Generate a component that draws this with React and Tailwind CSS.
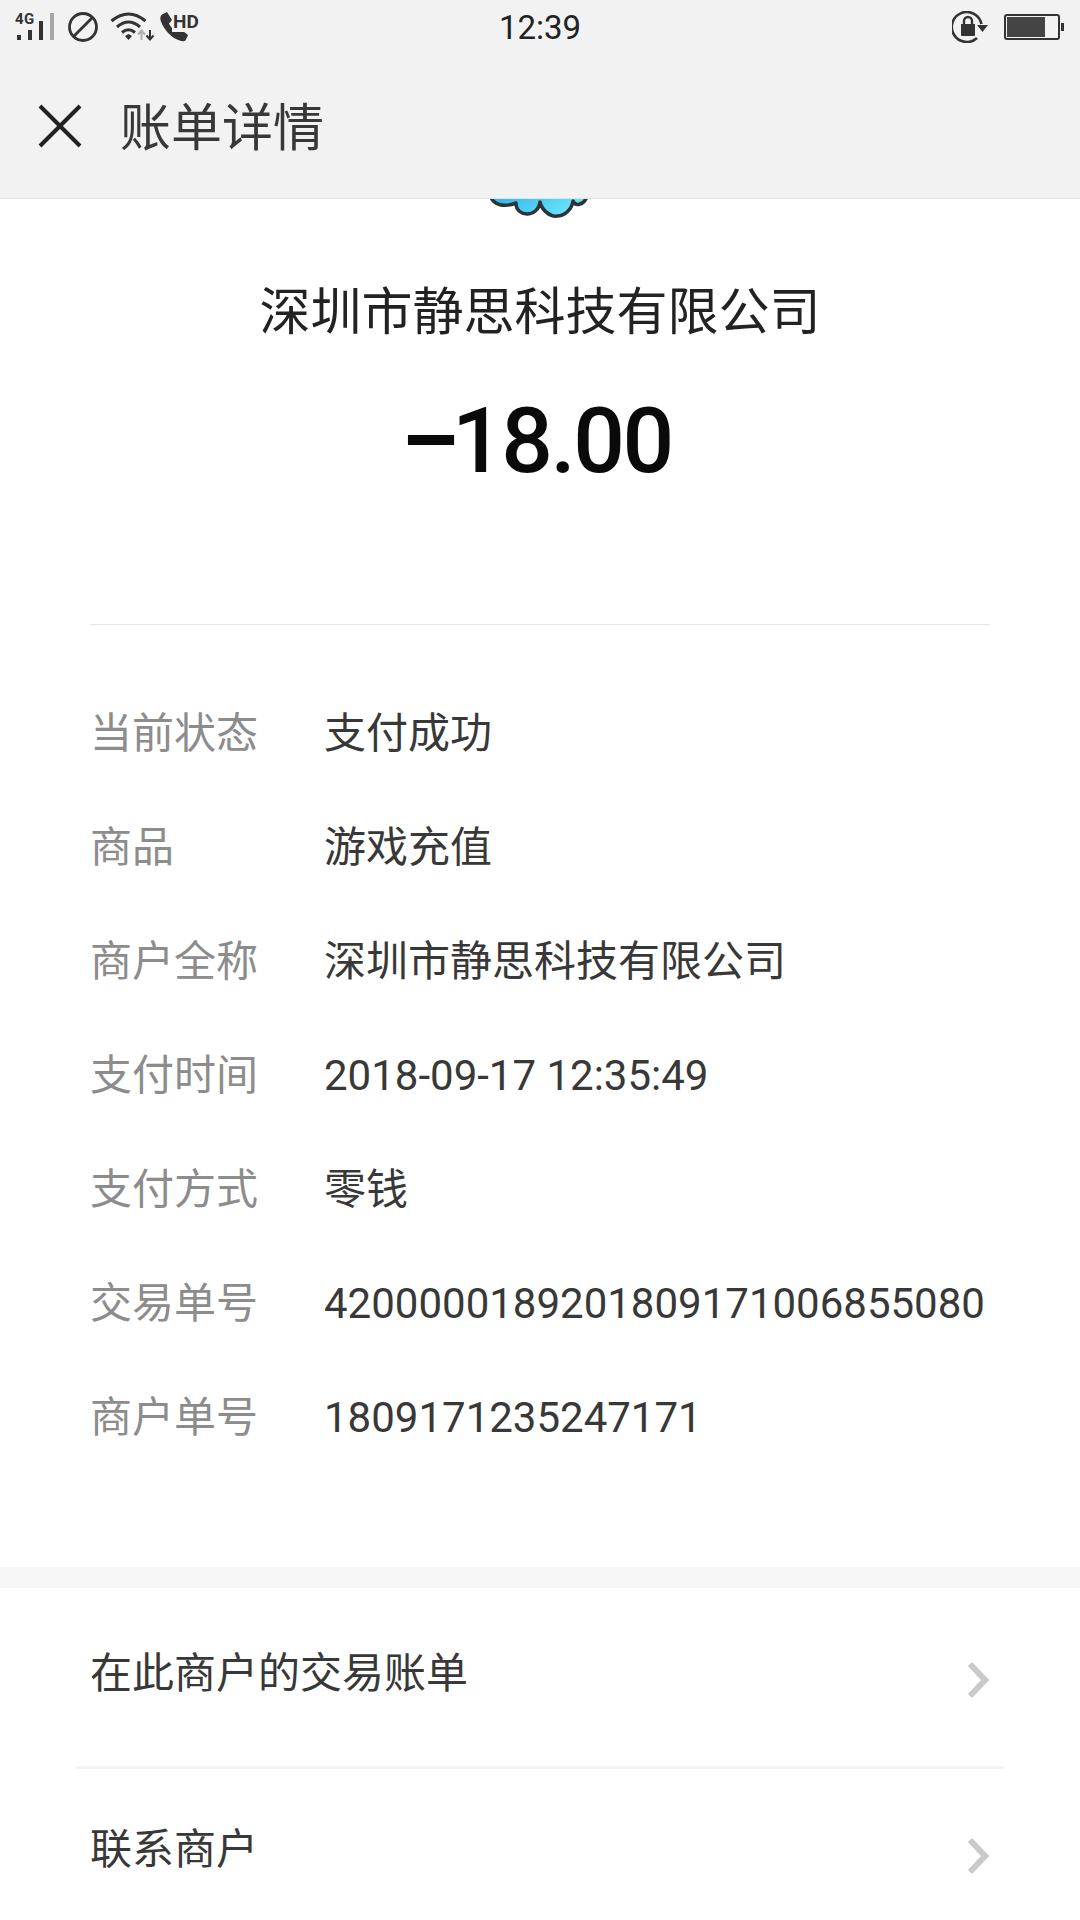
const sans = "font-['Roboto','Noto_Sans_CJK_SC',sans-serif]";

function StatusBar() {
  return (
    <div className="h-[56px] flex items-center justify-between relative">
      <div className="flex items-center pl-[15px] pb-[2px]">
        <div className="w-[40px] h-[30px] relative">
          <span className="absolute left-0 top-[0px] text-[15px] leading-[14px] font-bold text-[#333] font-['Roboto'] tracking-[0.5px]">4G</span>
          <svg width="40" height="30" viewBox="0 0 40 30">
            <rect x="2" y="23" width="4" height="5" fill="#333" />
            <rect x="13" y="18" width="4" height="10" fill="#333" />
            <rect x="24" y="9" width="4" height="19" fill="#333" />
            <rect x="35" y="1" width="4" height="27" fill="#a6a6a6" />
          </svg>
        </div>
        <svg width="30" height="30" viewBox="0 0 30 30" fill="none" stroke="#333" strokeWidth="2.8" className="ml-[13px]">
          <circle cx="15" cy="15" r="13.500" />
          <path d="M5.500 24.500L24.500 5.500" />
        </svg>
        <svg width="46" height="30" viewBox="0 0 46 30" fill="none" className="ml-[12px]">
          <path d="M1.500 9Q18.500 -5 35.500 9" stroke="#333" strokeWidth="3" />
          <path d="M7 15Q18.500 5 30 15" stroke="#333" strokeWidth="3" />
          <path d="M12 20.500Q18.500 15 25 20.500" stroke="#333" strokeWidth="3" />
          <path d="M15 24L18.500 22L22 24L18.500 28Z" fill="#333" />
          <path d="M31.500 28V19M28 22.500L31.500 18.500L35 22.500" stroke="#b0b0b0" strokeWidth="2" />
          <path d="M40 18V27M36.500 23.500L40 27.500L43.500 23.500" stroke="#333" strokeWidth="2" />
        </svg>
        <div className="w-[42px] h-[30px] relative">
          <svg width="32" height="30" viewBox="0 0 30 30" className="ml-[3px]">
            <path d="M2 2.500L7 0L12 8L9 11.500C10.500 15 14 18.500 17 19.500L20.500 17L28 23L25.500 28.500C24 30 19 29 14 26C8 22 2 14 0.500 8C0 5 1 3 2 2.500Z" fill="#333" />
          </svg>
          <span className="absolute left-[16px] top-[0px] text-[19px] leading-[20px] font-bold text-[#333] font-['Roboto'] bg-[#f2f2f2] pl-[1px]">HD</span>
        </div>
      </div>
      <div className={`absolute left-0 right-0 text-center text-[33px] leading-[56px] text-[#222] ${sans}`}>12:39</div>
      <div className="flex items-center pr-[16px] pb-[2px] gap-[16px] relative">
        <svg width="36" height="32" viewBox="0 0 36 32" fill="none">
          <path d="M25 27A15 15 0 1 1 29.500 13" stroke="#333" strokeWidth="2.600" />
          <path d="M9 13H23V24Q23 25 22 25H10Q9 25 9 24Z" fill="#333" />
          <path d="M12 13V10A4 4 0 0 1 20 10V13" stroke="#333" strokeWidth="2.400" />
          <path d="M25 14H36L30.500 21Z" fill="#333" />
        </svg>
        <div className="flex items-center">
          <div className="w-[56px] h-[26px] border-[2px] border-[#333] rounded-[3px] p-[1px]">
            <div className="w-[38px] h-full bg-[#444]" />
          </div>
          <div className="w-[3px] h-[8px] bg-[#333] ml-[1px]" />
        </div>
      </div>
    </div>
  );
}

function Row({ label, value }) {
  return (
    <div className="flex h-[114px] items-center">
      <div className="w-[234px] text-[#8c8c8c]">{label}</div>
      <div className="text-[#383838] whitespace-nowrap">{value}</div>
    </div>
  );
}

function Link({ label, border }) {
  return (
    <div className={`mx-[76px] ${border ? "h-[181px] border-b-[3px] border-[#f3f3f4] pt-[60px]" : "h-[177px] pt-[55px]"}`}>
      <div className="flex justify-between items-center pl-[14px] pr-[15px]">
        <span className="text-[42px] leading-[52px] text-[#383838]">{label}</span>
        <svg width="24" height="36" viewBox="0 0 24 36" className="mt-[12px] -mr-[1px]" fill="none">
          <path d="M4 2L19 18L4 34" stroke="#c9c9ce" strokeWidth="6" />
        </svg>
      </div>
    </div>
  );
}

const rows = [
  ["当前状态", "支付成功"],
  ["商品", "游戏充值"],
  ["商户全称", "深圳市静思科技有限公司"],
  ["支付时间", "2018-09-17 12:35:49"],
  ["支付方式", "零钱"],
  ["交易单号", "4200000189201809171006855080"],
  ["商户单号", "1809171235247171"],
];

export default function App() {
  return (
    <div className={`w-[1080px] h-[1920px] bg-white overflow-hidden ${sans}`}>
      <div className="h-[199px] bg-[#f2f2f2] border-b border-[#e2e2e2]">
        <StatusBar />
        <div className="flex items-center h-[140px] pl-[37px]">
          <svg width="46" height="46" viewBox="0 0 46 46" fill="none" stroke="#222" strokeWidth="4">
            <path d="M3 3L43 43M43 3L3 43" />
          </svg>
          <span className="ml-[37px] mt-[5px] text-[51px] leading-[60px] text-[#383838]">账单详情</span>
        </div>
      </div>
      <div className="h-[20px] flex justify-center items-start">
        <svg width="100" height="20" viewBox="0 0 100 20" className="ml-[-2px]">
          <defs>
            <linearGradient id="drop" x1="0" y1="0" x2="1" y2="0.300">
              <stop offset="0" stopColor="#2fb2ee" />
              <stop offset="1" stopColor="#6be6fb" />
            </linearGradient>
          </defs>
          <path d="M2 -2C4 5 14 9 27 4C27 12 33 15 38 15C44 15 50 11 51 3C53 12 62 18 68 17C76 17 83 10 84 2C86 7 94 7 98 -2Z" fill="url(#drop)" stroke="#2c3438" strokeWidth="3.500" strokeLinejoin="round" />
        </svg>
      </div>
      <div className="text-center text-[51px] leading-[70px] text-[#222] mt-[59px]">深圳市静思科技有限公司</div>
      <div className="text-center text-[91px] leading-[100px] font-medium text-[#0a0a0a] mt-[43px] tracking-[-2.5px] pr-[7px]">
        <span className="font-bold inline-block -mr-[4px]">–</span>18.00
      </div>
      <div className="mx-[90px] mt-[133px] border-t border-[#e5e5e5] pt-[52px] text-[42px] leading-[52px]">
        {rows.map(([l, v]) => <Row key={l} label={l} value={v} />)}
      </div>
      <div className="mt-[92px] h-[21px] bg-[#f7f7f7]" />
      <Link label="在此商户的交易账单" border />
      <Link label="联系商户" />
    </div>
  );
}
